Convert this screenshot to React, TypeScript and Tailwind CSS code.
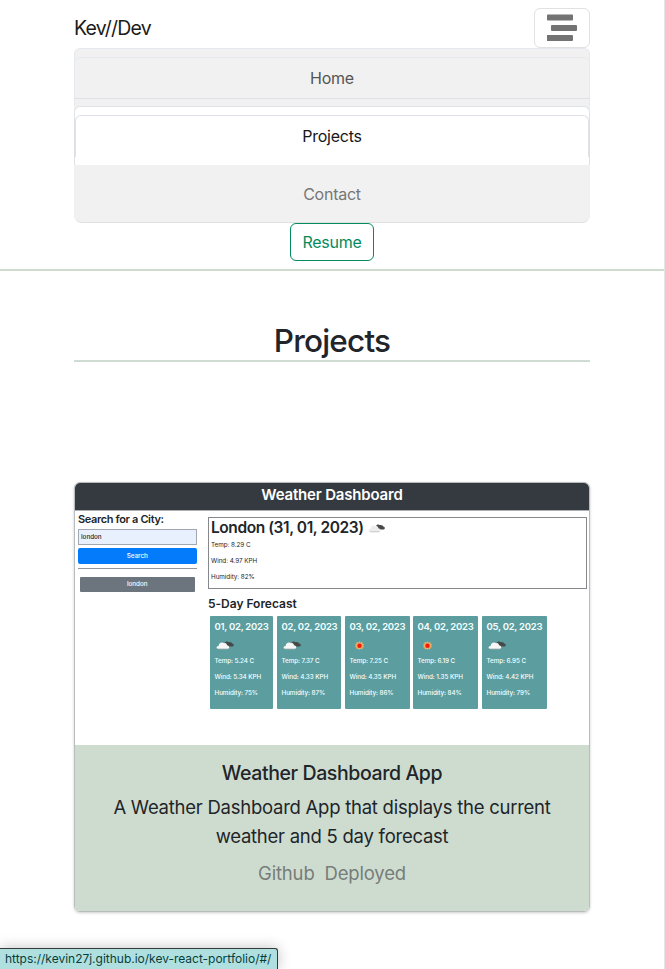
type Day = {
  date: string;
  sky: 'cloud' | 'sun';
  temp: string;
  wind: string;
  humidity: string;
  width: string;
};

const days: Day[] = [
  { date: '01, 02, 2023', sky: 'cloud', temp: '5.24', wind: '5.34', humidity: '75', width: 'w-[63px] mr-1' },
  { date: '02, 02, 2023', sky: 'cloud', temp: '7.37', wind: '4.33', humidity: '87', width: 'w-16 mr-1' },
  { date: '03, 02, 2023', sky: 'sun', temp: '7.25', wind: '4.35', humidity: '86', width: 'w-[65px] mr-[3px]' },
  { date: '04, 02, 2023', sky: 'sun', temp: '6.19', wind: '1.35', humidity: '84', width: 'w-[65px] mr-1' },
  { date: '05, 02, 2023', sky: 'cloud', temp: '6.95', wind: '4.42', humidity: '79', width: 'w-[65px]' },
];

function Cloud({ className, base }: { className: string; base: string }) {
  return (
    <svg viewBox="0 0 17 9" preserveAspectRatio="none" className={className} aria-hidden="true">
      <path d="M8 2.500C8.500.3 10.800.1 12 1.200c1.700-.4 3 .5 3.200 1.400 2 .3 2.100 2.400.5 2.900L10 5.500Z" fill="#484848" />
      <path d="M2.500 8C-.2 7.800 0 5.200 2.400 5 2.500 2.200 5.500.3 7.700 2.200 9.300 1.600 10.400 3 10.300 4.200 13 4.500 13.300 7.600 11 8Z" fill={base} />
      <path d="M1.500 7.400h10.300l-.7.800H2.400Z" fill="#bcbcbc" />
    </svg>
  );
}

function Sun() {
  return (
    <svg viewBox="0 0 10 10" className="ml-[5.500px] size-[9px]" aria-hidden="true">
      <path d="m5 0 1.100 1.900L8.200.9l.1 2.100 1.700.7-1 1.500 1 1.600-1.800.6-.1 2-2-.9L5 10 3.900 8.500l-2 .9-.1-2L0 6.800l1-1.600-1-1.500L1.700 3l.1-2.100 2.100 1Z" fill="#efae62" />
      <circle cx="5" cy="5.200" r="2.500" fill="#f51b0c" />
    </svg>
  );
}

function Forecast({ day }: { day: Day }) {
  return (
    <div className={`h-[93px] shrink-0 rounded-[1px] bg-[#5c9d9f] pl-[4.500px] pt-[4px] text-[#f4ffff] ${day.width}`}>
      <p className="h-[13px] whitespace-nowrap text-[9.500px] leading-[13px] font-semibold tracking-[-0.260px]">{day.date}</p>
      <div className="flex h-6 items-center">{day.sky === 'cloud' ? <Cloud base="#f7f7f7" className="ml-[1px] h-[9px] w-[18px]" /> : <Sun />}</div>
      <div className="whitespace-nowrap text-[6.300px] leading-4 font-medium tracking-[-0.060px]">
        <p className="-mt-[4.500px]">Temp: {day.temp} C</p>
        <p>Wind: {day.wind} KPH</p>
        <p>Humidity: {day.humidity}%</p>
      </div>
    </div>
  );
}

function DashboardPreview() {
  return (
    <div className="h-[262px] rounded-t-[5px] bg-white text-[#212529]">
      <div className="h-[27px] rounded-t-[5px] bg-[#343a40] text-center text-[15px] leading-6 font-semibold tracking-[-0.180px] text-white">Weather Dashboard</div>
      <div className="flex border-t border-[#adb0b3]">
        <div className="ml-[3px] w-[118.500px] shrink-0">
          <h3 className="mt-px h-[17px] whitespace-nowrap text-[11px] leading-[15px] font-semibold tracking-[-0.360px]">Search for a City:</h3>
          <div className="h-[15.500px] border border-[#a1a8b2] bg-[#e8f0fe] pl-[2px] text-[6.300px] leading-[14px] font-medium">london</div>
          <div className="mt-[3.500px] h-[16px] rounded-[2px] bg-[#047bfb] text-center text-[6.300px] leading-4 font-medium text-white">Search</div>
          <div className="mt-1 h-px bg-[#92959a]" />
          <div className="mx-[2px] mt-2 h-[15px] rounded-[1px] bg-[#6c757d] text-center text-[6.300px] leading-[15px] font-medium text-white">london</div>
        </div>
        <div className="ml-[11.500px] mt-1.5 grow">
          <div className="mr-[2px] h-[72px] border border-[#86888b] pl-[2px]">
            <div className="mt-px flex h-[18px] items-center">
              <span className="text-[15.500px] leading-[18px] font-semibold tracking-[-0.420px] whitespace-nowrap">London (31, 01, 2023)</span>
              <Cloud base="#ededed" className="ml-[4px] h-[9px] w-[17px]" />
            </div>
            <div className="text-[6.300px] leading-4 tracking-[-0.030px]">
              <p>Temp: 8.29 C</p><p>Wind: 4.97 KPH</p><p>Humidity: 82%</p>
            </div>
          </div>
          <h3 className="mt-2 h-[19px] text-[12px] leading-[14px] font-semibold tracking-[-0.020px]">5-Day Forecast</h3>
          <div className="ml-[2px] flex">
            {days.map((day) => <Forecast key={day.date} day={day} />)}
          </div>
        </div>
      </div>
    </div>
  );
}

function Header() {
  return (
    <header className="border-b-2 border-[#cedcd0] px-[74px] pt-2 pb-2">
      <div className="flex h-10 items-center justify-between">
        <a className="text-[19.500px] leading-[30px] tracking-[-0.800px] text-[#1b1b1b]">Kev//Dev</a>
        <button aria-label="Toggle navigation" className="flex h-10 w-14 items-center justify-center rounded-md border border-[#dfe1e3]">
          <svg width="32" height="30" viewBox="0 0 32 30" fill="#737373" aria-hidden="true">
            <path d="M2 1.500h24q1 0 1 1v4q0 1-1 1H2q-1 0-1-1v-4q0-1 1-1ZM6 12h24q1 0 1 1v4q0 1-1 1H6q-1 0-1-1v-4q0-1 1-1ZM1 22h25q1 0 1 1v4q0 1-1 1H1Z" />
          </svg>
        </button>
      </div>
      <nav className="text-center text-[16px] leading-6 tracking-[-0.250px]">
        <div className="h-[58px] rounded-t-md border-x border-t border-[#e5e8ec] bg-[#f1f1f1] pt-2">
          <div className="h-[42px] rounded-t-md border-t border-b border-t-[#e5e8ec] border-b-[#dee0e6] pt-2 text-[#555555]">Home</div>
        </div>
        <div className="h-[59px] bg-[#f1f1f1]">
          <div className="h-[59px] rounded-t-md border-x border-t border-[#dee2e6] bg-white pt-2">
            <div className="h-[42px] rounded-t-md border-x border-t border-[#dee2e6] pt-2 text-[#171717]">Projects</div>
          </div>
        </div>
        <div className="h-[58px] rounded-b-lg border-b border-[#dee0e3] bg-[#f1f1f1] pt-[17px] text-[#777777]">Contact</div>
        <a className="mx-auto block h-[38px] w-[84px] rounded-md border border-[#058a5c] pt-1.5 text-[#058a5c]">Resume</a>
      </nav>
    </header>
  );
}

export default function App() {
  return (
    <div className="relative h-[969px] w-[665px] overflow-hidden border-r border-[#e5e5e5] bg-white font-['Inter',sans-serif] text-[#212529]">
      <Header />
      <main className="mx-[74px] pt-[51px]">
        <h1 className="h-[40px] border-b-2 border-[#cedcd4] text-center text-[31.500px] leading-[38px] font-medium tracking-[-0.800px]">Projects</h1>
        <article className="mt-[120px] rounded-md border border-[#b9bcbc] shadow-[0_1px_3px_rgba(0,0,0,0.2)]">
          <DashboardPreview />
          <div className="h-[166px] rounded-b-[5px] bg-[#cedcd0] pt-4 text-center">
            <h2 className="text-[19.500px] leading-6 font-medium tracking-[-0.400px]">Weather Dashboard App</h2>
            <p className="mt-2 text-[18.500px] leading-[29px] tracking-[-0.250px]">A Weather Dashboard App that displays the current<br />weather and 5 day forecast</p>
            <div className="mt-2 flex justify-center gap-2.5 text-[18.500px] leading-[29px] tracking-[-0.180px] text-[#777d78]"><a>Github</a><a>Deployed</a></div>
          </div>
        </article>
      </main>
      <div className="absolute bottom-0 left-0 h-[21px] w-[278px] rounded-tr-[3px] border-t border-r border-[#343b3b] bg-[#afe0df] pl-[5px] text-[12px] leading-5 tracking-[-0.010px] whitespace-nowrap text-[#073e3c] shadow-[0_0_14px_rgba(0,0,0,0.25)]">https://kevin27j.github.io/kev-react-portfolio/#/</div>
    </div>
  );
}
